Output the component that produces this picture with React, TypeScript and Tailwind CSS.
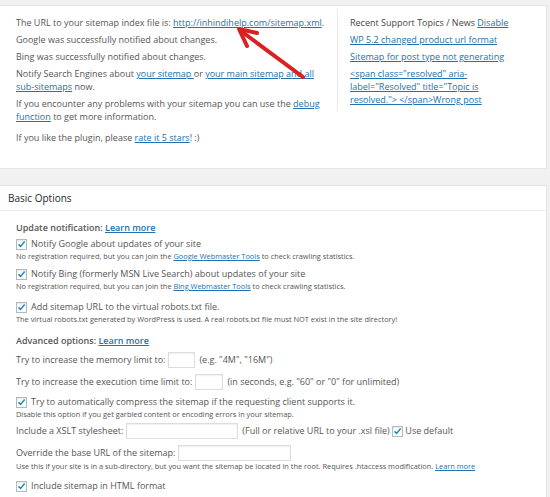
import React from "react";

const font = { fontFamily: '"Open Sans", "Noto Sans", sans-serif' };

function Box({ checked = true }: { checked?: boolean }) {
  return (
    <span className="inline-flex w-[11px] h-[11px] shrink-0 items-center justify-center border border-[#b4b9be] bg-white shadow-[inset_0_1px_2px_rgba(0,0,0,0.1)]">
      {checked && (
        <svg viewBox="0 0 12 12" className="w-[10px] h-[10px]">
          <path d="M2 6.5 L4.8 9.2 L10.2 2.6" fill="none" stroke="#1e8cbe" strokeWidth="2" />
        </svg>
      )}
    </span>
  );
}

function A({ children }: { children: React.ReactNode }) {
  return <span className="text-[#2271b1] underline underline-offset-1">{children}</span>;
}

function Input({ w }: { w: string }) {
  return <span className={`inline-block h-[16px] border border-[#ddd] bg-white shadow-[inset_0_1px_2px_rgba(0,0,0,0.07)] ${w}`} />;
}

export default function App() {
  return (
    <div className="relative w-[550px] h-[497px] overflow-hidden bg-[#f1f1f1] pt-[5px] text-[#555]" style={font}>
      {/* top panel */}
      <div className="w-[547px] bg-white border border-[#e5e5e5] border-l-0 h-[164px] pt-[10px] pl-[16px] text-[9px] leading-[13px]">
        <div className="flex">
          <div className="w-[306px] space-y-[4px]">
            <p className="whitespace-nowrap">
              The URL to your sitemap index file is: <A>http://inhindihelp.com/sitemap.xml</A>.
            </p>
            <p>Google was successfully notified about changes.</p>
            <p>Bing was successfully notified about changes.</p>
            <p>
              Notify Search Engines about <A>your sitemap </A> or <A>your main sitemap and all sub-sitemaps</A> now.
            </p>
            <p>
              If you encounter any problems with your sitemap you can use the <A>debug function</A> to get more information.
            </p>
          </div>
          <div className="ml-[15px] mt-[-7px] h-[102px] border-l border-[#e8e8e8]" />
          <div className="ml-[12px] w-[165px] space-y-[4px]">
            <p>
              <span className="text-[#444]">Recent Support Topics / News</span> <A>Disable</A>
            </p>
            <p><A>WP 5.2 changed product url format</A></p>
            <p><A>Sitemap for post type not generating</A></p>
            <p>
              <A>&lt;span class="resolved" aria-label="Resolved" title="Topic is resolved."&gt; &lt;/span&gt;Wrong post</A>
            </p>
          </div>
        </div>
        <p className="mt-[8px]">
          If you like the plugin, please <A>rate it 5 stars</A>! :)
        </p>
      </div>

      {/* basic options panel */}
      <div className="mt-[16px] w-[547px] bg-white border border-[#e5e5e5] border-l-0 h-[320px]">
        <div className="h-[25px] border-b border-[#eee] pl-[8px] flex items-center text-[10px] text-[#23282d]">
          Basic Options
        </div>
        <div className="pl-[16px] pt-[8px] text-[9px]">
          <div className="h-[18px] flex items-center font-semibold text-[#555]">
            Update notification:&nbsp;<A>Learn more</A>
          </div>
          <div className="h-[14px] flex items-center gap-[4px]">
            <Box /> Notify Google about updates of your site
          </div>
          <div className="h-[11px] flex items-center text-[7.4px] text-[#555]">
            No registration required, but you can join the&nbsp;<A>Google Webmaster Tools</A>&nbsp;to check crawling statistics.
          </div>
          <div className="mt-[5px] h-[14px] flex items-center gap-[4px]">
            <Box /> Notify Bing (formerly MSN Live Search) about updates of your site
          </div>
          <div className="h-[11px] flex items-center text-[7.4px] text-[#555]">
            No registration required, but you can join the&nbsp;<A>Bing Webmaster Tools</A>&nbsp;to check crawling statistics.
          </div>
          <div className="mt-[8px] h-[14px] flex items-center gap-[4px]">
            <Box /> Add sitemap URL to the virtual robots.txt file.
          </div>
          <div className="h-[11px] flex items-center text-[7.4px] text-[#555]">
            The virtual robots.txt generated by WordPress is used. A real robots.txt file must NOT exist in the site directory!
          </div>
          <div className="mt-[9px] h-[14px] flex items-center font-semibold">
            Advanced options:&nbsp;<A>Learn more</A>
          </div>
          <div className="mt-[4px] h-[16px] flex items-center">
            Try to increase the memory limit to:&nbsp;<Input w="w-[27px]" />&nbsp;&nbsp;(e.g. "4M", "16M")
          </div>
          <div className="mt-[6px] h-[16px] flex items-center">
            Try to increase the execution time limit to:&nbsp;<Input w="w-[28px]" />&nbsp;&nbsp;(in seconds, e.g. "60" or "0" for unlimited)
          </div>
          <div className="mt-[5px] h-[14px] flex items-center gap-[4px]">
            <Box /> Try to automatically compress the sitemap if the requesting client supports it.
          </div>
          <div className="h-[11px] flex items-center text-[7.4px] text-[#555]">
            Disable this option if you get garbled content or encoding errors in your sitemap.
          </div>
          <div className="mt-[3px] h-[16px] flex items-center">
            Include a XSLT stylesheet:&nbsp;<Input w="w-[112px]" />&nbsp;&nbsp;(Full or relative URL to your .xsl file)&nbsp;<Box />&nbsp;Use default
          </div>
          <div className="mt-[6px] h-[16px] flex items-center">
            Override the base URL of the sitemap:&nbsp;<Input w="w-[113px]" />
          </div>
          <div className="h-[11px] flex items-center text-[7.4px] text-[#555]">
            Use this if your site is in a sub-directory, but you want the sitemap be located in the root. Requires .htaccess modification.&nbsp;<A>Learn more</A>
          </div>
          <div className="mt-[7px] h-[14px] flex items-center gap-[4px]">
            <Box /> Include sitemap in HTML format
          </div>
        </div>
      </div>

      {/* red arrow annotation */}
      <svg className="absolute left-0 top-0 pointer-events-none" width="550" height="497">
        <g stroke="#dc1f1f" strokeWidth="4" strokeLinecap="round" strokeLinejoin="round" fill="none">
          <path d="M303 77 L241 31" />
          <path d="M257 33 L239 29 L247 46" />
        </g>
      </svg>
    </div>
  );
}
